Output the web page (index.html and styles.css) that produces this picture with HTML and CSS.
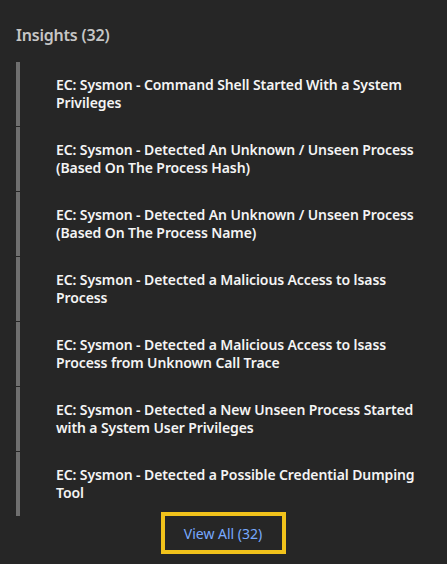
FILE: index.html
```html
<!DOCTYPE html>
<html lang="en">
<head>
<meta charset="utf-8">
<title>Insights</title>
<link rel="stylesheet" href="styles.css">
</head>
<body>
<section class="panel">
  <h2 class="title">Insights (32)</h2>
  <ul class="list">
    <li class="item">EC: Sysmon - Command Shell Started With a System Privileges</li>
    <li class="item">EC: Sysmon - Detected An Unknown / Unseen Process (Based On The Process Hash)</li>
    <li class="item">EC: Sysmon - Detected An Unknown / Unseen Process (Based On The Process Name)</li>
    <li class="item">EC: Sysmon - Detected a Malicious Access to lsass Process</li>
    <li class="item">EC: Sysmon - Detected a Malicious Access to lsass Process from Unknown Call Trace</li>
    <li class="item">EC: Sysmon - Detected a New Unseen Process Started with a System User Privileges</li>
    <li class="item">EC: Sysmon - Detected a Possible Credential Dumping Tool</li>
  </ul>
  <div class="actions">
    <button class="view-all" type="button">View All (32)</button>
  </div>
</section>
</body>
</html>
```
FILE: styles.css
```css
html, body {
  margin: 0;
  padding: 0;
  background: #262626;
}
body {
  font-family: "Noto Sans", "Open Sans", sans-serif;
  width: 447px;
  height: 564px;
  overflow: hidden;
}
.panel {
  padding: 23px 16px 0 16px;
}
.title {
  margin: 0 0 15px 0;
  font-size: 16px;
  line-height: 24px;
  font-weight: 600;
  letter-spacing: -0.2px;
  color: #c6c6c6;
}
.list {
  list-style: none;
  margin: 0;
  padding: 0;
  display: flex;
  flex-direction: column;
  gap: 1px;
}
.item {
  height: 64px;
  box-sizing: border-box;
  border-left: 4px solid #6f6f6f;
  padding: 14px 0 0 36px;
  font-size: 14px;
  line-height: 18px;
  font-weight: 600;
  letter-spacing: -0.1px;
  color: #f4f4f4;
}
.actions {
  display: flex;
  justify-content: center;
}
.view-all {
  margin-left: -1px;
  width: 117px;
  height: 34px;
  background: #262626;
  border: none;
  outline: 4px solid #f1c21b;
  color: #78a9ff;
  font-family: inherit;
  font-size: 14px;
  font-weight: 400;
  padding: 0;
}
```
